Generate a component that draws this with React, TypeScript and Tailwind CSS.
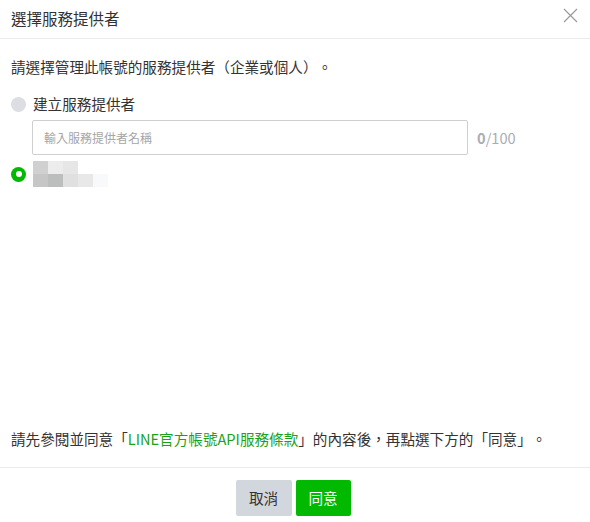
const font = '[font-family:"Noto_Sans_CJK_TC","Liberation_Sans",sans-serif]'

const blurRows = [
  ['#d0d0d0', '#ececec', '#e6e6e6', '#ffffff', '#ffffff'],
  ['#c6c6c6', '#bcbebe', '#e0e0e0', '#e8e8e8', '#f7f9fa'],
]

const App = () => {
  return (
    <div className={`flex h-[522px] w-[590px] flex-col bg-white text-[#333] [text-spacing-trim:space-all] ${font}`}>
      {/* Header */}
      <div className="flex h-[39px] shrink-0 items-center justify-between border-b border-[#ebebeb] pl-[11px] pr-[12px]">
        <h2 className="text-[15.5px] leading-none text-[#333]">選擇服務提供者</h2>
        <svg width="15" height="15" viewBox="0 0 15 15" className="mb-[8px]">
          <path d="M1 1 L14 14 M14 1 L1 14" stroke="#9a9a9a" strokeWidth="1.2" fill="none" />
        </svg>
      </div>

      {/* Body */}
      <div className="flex flex-1 flex-col px-[11px] pt-[18px]">
        <p className="text-[14.6px] leading-[20px]">請選擇管理此帳號的服務提供者（企業或個人）。</p>

        <label className="mt-[17px] flex h-[20px] items-center gap-[7px]">
          <span className="h-[15px] w-[15px] rounded-full bg-[#dcdee3]" />
          <span className="text-[14.6px] leading-[20px]">建立服務提供者</span>
        </label>

        <div className="mt-[6px] flex items-center gap-[9px] pl-[21px]">
          <div className="flex h-[35px] w-[436px] items-center rounded-[2px] border border-[#cfcfcf] px-[11px] text-[12px] text-[#a6a6a6]">
            輸入服務提供者名稱
          </div>
          <span className="text-[14.6px] text-[#a9adb3]">
            <b className="font-bold">0</b>/100
          </span>
        </div>

        <label className="mt-[6px] flex h-[26px] items-center gap-[7px]">
          <span className="flex h-[15px] w-[15px] items-center justify-center rounded-full bg-[#00b900]">
            <span className="h-[6px] w-[6px] rounded-full bg-white" />
          </span>
          <span className="flex flex-col">
            {blurRows.map((row, i) => (
              <span key={i} className="flex">
                {row.map((c, j) => (
                  <span key={j} className="h-[13px] w-[15px]" style={{ backgroundColor: c }} />
                ))}
              </span>
            ))}
          </span>
        </label>

        <div className="flex-1" />

        <p className="pb-[18px] text-[14.6px] leading-[20px]">
          請先參閱並同意「<span className="text-[#19a319]">LINE官方帳號API服務條款</span>」的內容後，再點選下方的「同意」。
        </p>
      </div>

      {/* Footer */}
      <div className="flex h-[55px] shrink-0 justify-center gap-[4px] border-t border-[#ebebeb] pr-[4px] pt-[12px]">
        <button className="h-[36px] w-[56px] rounded-[2px] bg-[#d2d6dd] text-[14.6px] text-[#333]">取消</button>
        <button className="h-[36px] w-[55px] rounded-[2px] bg-[#00b900] text-[14.6px] text-white">同意</button>
      </div>
    </div>
  )
}

export default App
